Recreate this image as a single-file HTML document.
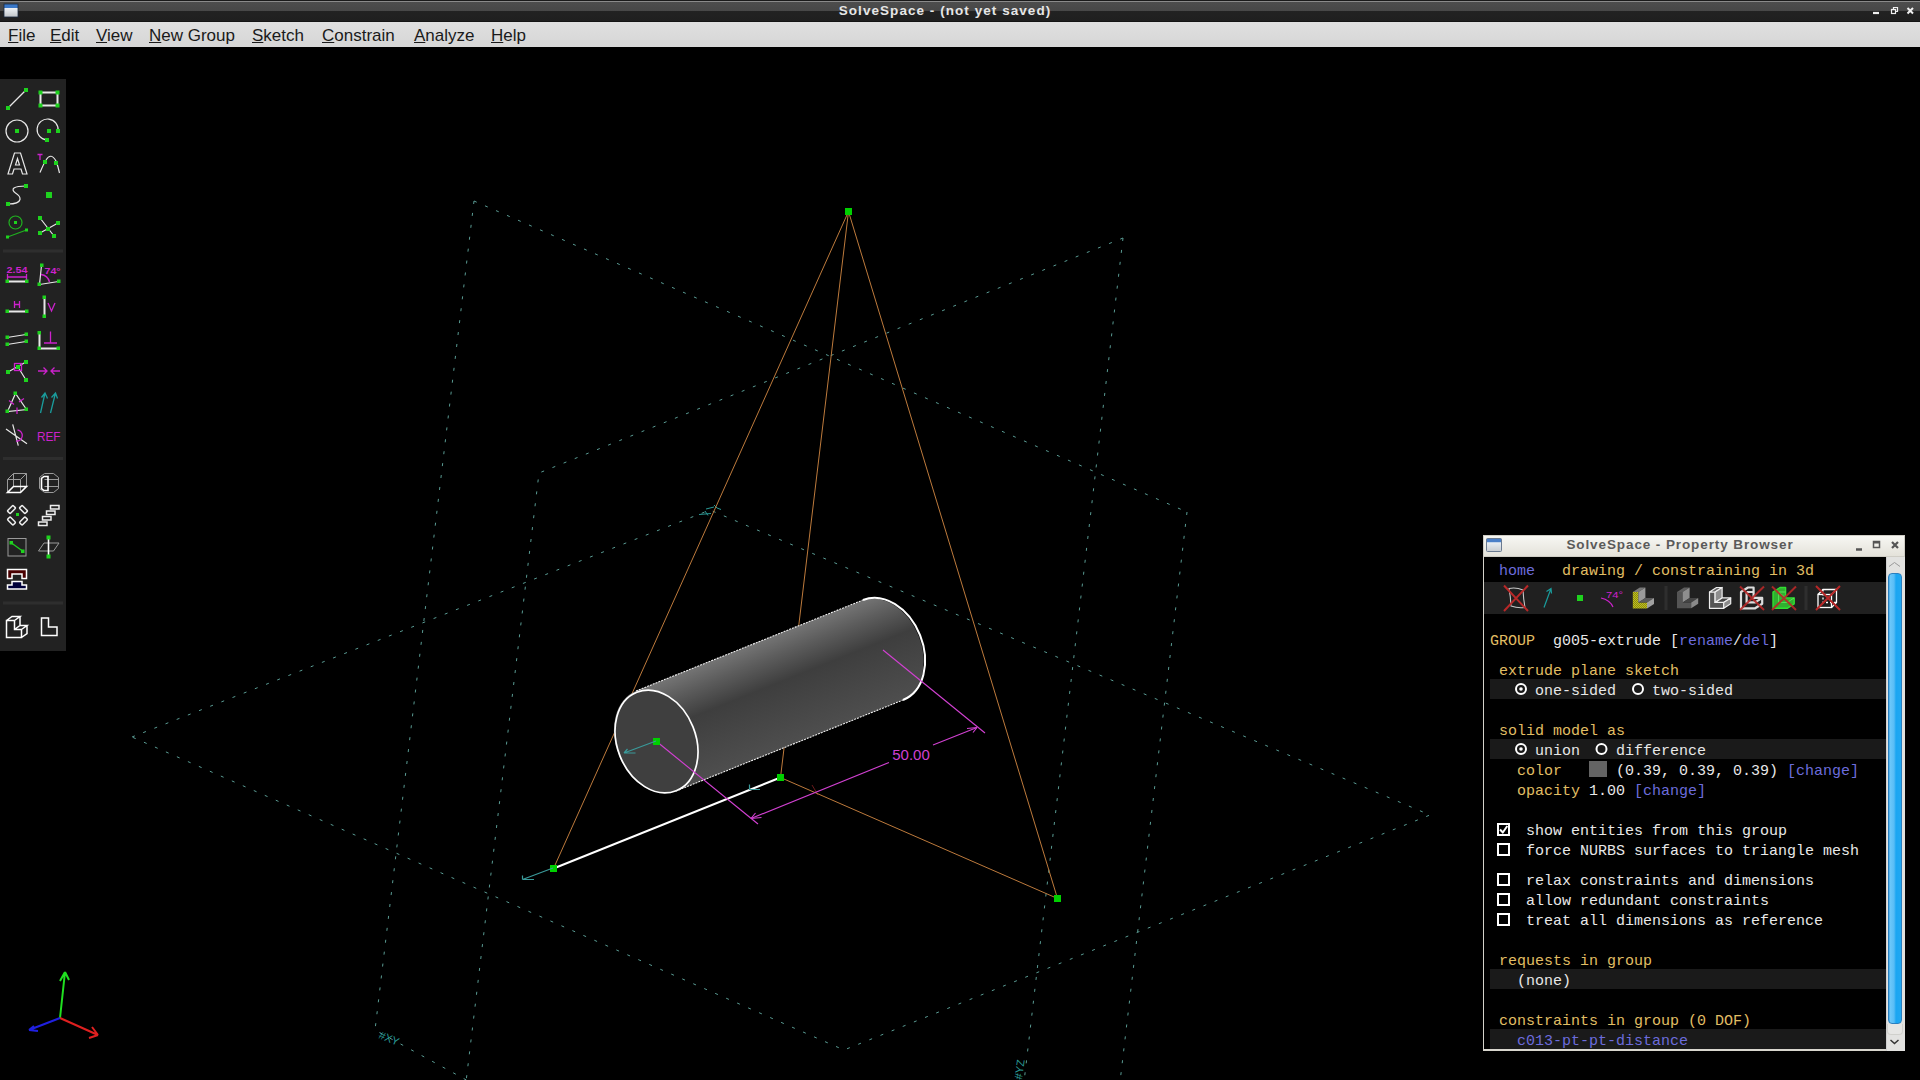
<!DOCTYPE html>
<html><head><meta charset="utf-8">
<style>
html,body{margin:0;padding:0;width:1920px;height:1080px;overflow:hidden;background:#000;}
body{position:relative;font-family:"Liberation Sans",sans-serif;}
.abs{position:absolute;}
#title{left:0;top:0;width:1920px;height:22px;background:linear-gradient(#1a1a1a 0,#1a1a1a 1px,#8a8a8a 1px,#8a8a8a 2px,#4d4d4d 2px,#474747 11px,#222 11px,#1f1f1f 21px,#0a0a0a 22px);}
#title .t{left:1px;width:1888px;top:2px;text-align:center;color:#e6e6e6;font-weight:bold;font-size:13.5px;line-height:18px;letter-spacing:1.05px;}
#menu{left:0;top:22px;width:1920px;height:25px;background:linear-gradient(#e0e0e0,#d6d6d6);}
#menu span{position:absolute;top:4px;font-size:17px;line-height:20px;color:#1a1a1a;white-space:nowrap;}
#menu u{text-decoration:underline;text-decoration-thickness:1px;text-underline-offset:1px;}
#tb{left:0;top:79px;width:66px;height:572px;background:#222;}
#pb{left:1483px;top:535px;width:422px;height:516px;background:#000;}
#pbt{left:0;top:0;width:422px;height:22px;background:linear-gradient(#f7f7f3,#e4e2da);border:1px solid #cfcdc5;box-sizing:border-box;}
#pbt .t{left:1px;width:390px;top:0px;text-align:center;color:#5a5a5a;font-weight:bold;font-size:13.5px;line-height:18px;letter-spacing:0.9px;}
.mono{font-family:"Liberation Mono",monospace;font-size:15px;line-height:20px;white-space:pre;position:absolute;}
.y{color:#e0be64;}.w{color:#e8e8e8;}.b{color:#6c6cdc;}
</style></head><body>
<svg class="abs" style="left:0;top:0" width="1920" height="1080" viewBox="0 0 1920 1080">
<g fill="none" stroke="#5a9c94" stroke-width="1" stroke-dasharray="3 9">
<path d="M474 201 L1187 512 M474 201 L375 1030 L470 1082 M1187 512 L1120 1082"/>
<path d="M1123 238 L539 473 L466 1082 M1123 238 L1024 1082"/>
<path d="M132 737 L710 510 L1430 815 L844 1050 Z"/>
</g>
<g fill="#2a9a96" font-family="Liberation Sans" font-size="11">
<text x="0" y="0" transform="translate(378 1038) rotate(22)">#XY</text>
<text x="0" y="0" transform="translate(1022 1080) rotate(-82)">#YZ</text>
</g>
<g stroke="#2a9a96" stroke-width="1" fill="none">
<path d="M699 514.5 l12 -1 M705 511 l3 4.5 M706 509 l8 -2 M717 508 l4 1.5 M714 505 l3 3"/>
</g>
<path d="M812 785 l6 10" stroke="#6a1a1a" stroke-width="1"/>
<g stroke="#bd7a3c" stroke-width="1" fill="none">
<path d="M848.5 211.5 L553.5 868.5 M848.5 211.5 L780.5 777.5 M848.5 211.5 L1057.5 898.5 M780.5 777.5 L1057.5 898.5"/>
</g>
<path d="M553.5 868.5 L780.5 777.5" stroke="#fff" stroke-width="2" fill="none"/>
<defs>
<linearGradient id="cyl" gradientUnits="userSpaceOnUse" x1="636" y1="691" x2="676" y2="791">
<stop offset="0" stop-color="#747474"/>
<stop offset="0.18" stop-color="#5c5c5c"/>
<stop offset="0.42" stop-color="#3e3e3e"/>
<stop offset="0.7" stop-color="#464646"/>
<stop offset="1" stop-color="#4e4e4e"/>
</linearGradient>
</defs>
<path d="M636 691 L863 600.2 A39.8 53.7 -21.8 0 1 903 699.8 L676 791 A39.8 53.7 -21.8 0 1 636 691 Z" fill="url(#cyl)"/>
<ellipse cx="656.5" cy="741.5" rx="39.3" ry="53" transform="rotate(-21.8 656.5 741.5)" fill="#3f3f3f" stroke="#fff" stroke-width="1.7"/>
<path d="M636 691 L863 600 M676 791 L903 700" stroke="#f0f0f0" stroke-width="1.1" stroke-dasharray="2 1" fill="none"/>
<path d="M863 600 A39.8 53.7 -21.8 0 1 903 700" stroke="#fff" stroke-width="2" fill="none"/>
<g stroke="#d040d0" stroke-width="1.15" fill="none">
<path d="M656 741 L758 824 M883 650 L985 733"/>
<path d="M751 818.5 L889 762.5 M933 745 L977 727.5"/>
<path d="M751 818.5 l4.5 -5.5 M751 818.5 l10.5 -1"/>
<path d="M977 727.5 l-4 5 M977 727.5 l-10 1"/>
</g>
<text x="911" y="760" fill="#d040d0" font-family="Liberation Sans" font-size="15" text-anchor="middle">50.00</text>
<g fill="#00d000">
<rect x="845" y="208" width="7" height="7"/>
<rect x="550" y="865" width="7" height="7"/>
<rect x="777" y="774" width="7" height="7"/>
<rect x="1054" y="895" width="7" height="7"/>
<rect x="653" y="738" width="7" height="7"/>
</g>
<g stroke="#3a9a9a" stroke-width="1.2" fill="none">
<path d="M553 868 L522.5 879.5 M522.5 879.5 V875.5 M522.5 879.5 H534"/>
<path d="M656 741 L624 753 M624 753 l3.5 -4 M624 753 H635.5"/>
<path d="M749.5 784.5 V789.5 H760"/>
</g>
<g stroke-width="2" fill="none">
<path d="M60 1018 L65 972 M65 972 l-5 9 M65 972 l4 8" stroke="#20e020"/>
<path d="M60 1018 L98 1035 M98 1035 l-6 -8 M98 1035 l-9 3" stroke="#e02020"/>
<path d="M60 1018 L29 1030 M29 1030 l5 -4 M29 1030 l9 1" stroke="#2020e0"/>
</g>
</svg>
<div id="title" class="abs"><div class="t abs">SolveSpace - (not yet saved)</div></div>
<svg class="abs" style="left:1860px;top:0" width="60" height="22">
<path d="M13 13 h6" stroke="#f0f0f0" stroke-width="2.2"/>
<rect x="31.5" y="9.5" width="4" height="4" fill="none" stroke="#f0f0f0" stroke-width="1.2"/>
<path d="M33.5 9.5 V7.5 H37.5 V11.5 H35.5" fill="none" stroke="#f0f0f0" stroke-width="1.2"/>
<path d="M47.5 8 l5.5 5.5 M53 8 l-5.5 5.5" stroke="#f0f0f0" stroke-width="2"/>
</svg>
<svg class="abs" style="left:0;top:0" width="24" height="22">
<defs><linearGradient id="mic" x1="0" y1="0" x2="0" y2="1"><stop offset="0" stop-color="#3a78c8"/><stop offset="0.3" stop-color="#3a78c8"/><stop offset="0.31" stop-color="#eef2f6"/><stop offset="1" stop-color="#c0c4c8"/></linearGradient></defs>
<rect x="4" y="4" width="14" height="13" fill="url(#mic)" stroke="#1a2a40" stroke-width="0.8"/>
</svg>
<div id="menu" class="abs">
<span style="left:8px"><u>F</u>ile</span>
<span style="left:50px"><u>E</u>dit</span>
<span style="left:96px"><u>V</u>iew</span>
<span style="left:149px"><u>N</u>ew Group</span>
<span style="left:252px"><u>S</u>ketch</span>
<span style="left:322px"><u>C</u>onstrain</span>
<span style="left:414px"><u>A</u>nalyze</span>
<span style="left:491px"><u>H</u>elp</span>
</div>
<div id="tb" class="abs"></div>
<svg class="abs" style="left:0;top:0" width="66" height="651" viewBox="0 0 66 651">
<g fill="#2e2e2e"><rect x="3" y="249.5" width="60" height="3"/><rect x="3" y="457" width="60" height="3"/><rect x="3" y="601.5" width="60" height="3"/></g>
<g fill="none" stroke="#e8e8e8" stroke-width="1.2">
<path d="M8 108 L26 90"/>
<rect x="40.5" y="92.5" width="17" height="13" stroke-width="2"/>
<circle cx="17" cy="131" r="11"/>
<path d="M47 140 A10.5 10.5 0 1 1 58 131"/>
<path d="M8 174 L14.5 153 L20.5 153 L27 174 L22.5 174 L21 169 L14 169 L12.5 174 Z M15.5 165 L19.5 165 L17.5 158.5 Z"/>
<path d="M40 172.5 Q44 163 46 160 Q51 152 56 161 Q58 166 59.5 173"/>
<path d="M8 204 Q19 204 20 199.5 Q20.5 196 15.5 193 Q11.5 190 14 188 Q17 186 26 186"/>
<path d="M40 218 L54 236 M40 233 L58 223"/>
<path d="M7 281.5 H27" stroke-width="2"/>
<path d="M39.5 284.5 L41.5 265.5 M39.5 284.5 L58.5 281.5"/>
<path d="M7 311.5 H26.5" stroke-width="2"/>
<path d="M44.5 297.5 V316.5" stroke-width="2"/>
<path d="M7 337.5 L26 334.5 M7 344.5 L26 341.5"/>
<path d="M39.5 333 V348.5 H58.5" stroke-width="2"/>
<path d="M8 372 L26 362 M18 367 L26 380"/>
<path d="M15.5 393.5 L7.5 411.5 L26.5 409.5 Z"/>
<path d="M6 429 L27 443.7 M12.7 424.3 L18.3 445.7"/>
</g>
<g fill="none" stroke="#cc22cc" stroke-width="1.3">
<path d="M37.5 154.5 H42.5 M40 154.5 V160"/>
<path d="M7 277 H27 M7.5 274 V280 M26.5 274 V280"/>
<path d="M41 274.5 A10 10 0 0 1 49.5 282"/>
<path d="M14.5 301 V308 M19.5 301 V308 M14.5 304.5 H19.5"/>
<path d="M48 303 L51.5 311 L55 303"/>
<path d="M50.5 331.5 V343 M44 343 H57"/>
<rect x="14.5" y="363.5" width="7" height="7"/>
<path d="M38 371 H47 M43.5 367.5 L47 371 L43.5 374.5 M60 371 H51 M54.5 367.5 L51 371 L54.5 374.5"/>
<path d="M9 400.5 L14 404.5 M19 402 L24 398.5 M17 407.5 V414"/>
<path d="M17.5 430 A5.5 5.5 0 1 1 16 441"/>
</g>
<g fill="#cc22cc" font-family="Liberation Sans" font-weight="bold">
<text x="6.5" y="272.5" font-size="9.5" textLength="21" lengthAdjust="spacingAndGlyphs">2.54</text>
<text x="44.5" y="273.5" font-size="9.5" textLength="16" lengthAdjust="spacingAndGlyphs">74°</text>
<text x="37" y="440.5" font-size="13" font-weight="normal" textLength="23.5" lengthAdjust="spacingAndGlyphs">REF</text>
</g>
<g fill="none" stroke="#1a9c9c" stroke-width="1.3">
<path d="M40.5 413 L45 393 M41.5 397.5 L45 393 L47.5 398.5 M50.5 413 L55.5 393 M51.5 397.5 L55.5 393 L57.5 398.5"/>
</g>
<g fill="none" stroke="#20b020" stroke-width="1.2">
<circle cx="15.5" cy="222.5" r="6.5"/>
<path d="M7.5 237 L26.5 230"/>
</g>
<g fill="#1ed21e">
<rect x="6" y="106" width="4" height="4"/><rect x="24" y="88" width="4" height="4"/>
<rect x="38.5" y="90.5" width="4" height="4"/><rect x="55.5" y="90.5" width="4" height="4"/><rect x="38.5" y="103.5" width="4" height="4"/><rect x="55.5" y="103.5" width="4" height="4"/>
<rect x="15" y="129" width="4" height="4"/>
<rect x="47" y="129" width="4" height="4"/><rect x="56" y="129" width="4" height="4"/><rect x="45" y="138" width="4" height="4"/>
<rect x="43" y="160" width="4" height="4"/><rect x="54" y="161" width="4" height="4"/>
<rect x="6" y="202" width="4" height="4"/><rect x="24" y="184" width="4" height="4"/>
<rect x="46" y="192" width="6" height="6"/>
<rect x="14" y="221" width="3" height="3"/><rect x="6" y="235.5" width="3" height="3"/><rect x="25" y="228.5" width="3" height="3"/>
<rect x="38" y="216" width="4" height="4"/><rect x="56" y="221" width="4" height="4"/><rect x="38" y="231" width="4" height="4"/><rect x="52" y="234" width="4" height="4"/><rect x="46" y="227" width="4" height="4"/>
<rect x="5.5" y="279.5" width="3.5" height="3.5"/><rect x="25" y="279.5" width="3.5" height="3.5"/>
<rect x="40" y="263.5" width="3.5" height="3.5"/><rect x="57" y="279.5" width="3.5" height="3.5"/><rect x="37.5" y="282.5" width="3.5" height="3.5"/>
<rect x="5.5" y="309.5" width="3.5" height="3.5"/><rect x="25" y="309.5" width="3.5" height="3.5"/>
<rect x="42.5" y="295.5" width="3.5" height="3.5"/><rect x="42.5" y="314.5" width="3.5" height="3.5"/>
<rect x="5.5" y="335.5" width="3.5" height="3.5"/><rect x="24.5" y="332.5" width="3.5" height="3.5"/><rect x="5.5" y="342.5" width="3.5" height="3.5"/><rect x="24.5" y="339.5" width="3.5" height="3.5"/>
<rect x="37.5" y="331" width="3.5" height="3.5"/><rect x="37.5" y="346.5" width="3.5" height="3.5"/><rect x="56.5" y="346.5" width="3.5" height="3.5"/>
<rect x="6" y="370" width="4" height="4"/><rect x="24" y="360" width="4" height="4"/><rect x="24" y="378" width="4" height="4"/><rect x="16" y="365" width="4" height="4"/>
<rect x="13.5" y="391.5" width="3.5" height="3.5"/><rect x="5.5" y="409.5" width="3.5" height="3.5"/><rect x="24.5" y="407.5" width="3.5" height="3.5"/>
</g>
<g fill="none" stroke="#9a9a9a" stroke-width="1">
<path d="M7.5 479.5 H20.5 V492.5 M7.5 479.5 V492.5 M13.5 473.5 H26.5 V486.5 M7.5 479.5 L13.5 473.5 M20.5 479.5 L26.5 473.5 M13.5 473.5 V486.5"/>
<path d="M44.5 473.5 H53.5 L58.5 477.5 V488.5 L53.5 492.5 H44.5 L39.5 488.5 V477.5 Z M44.5 479.5 H58.5 M44.5 486.5 H58.5"/>
<rect x="8" y="538.5" width="18" height="17.5"/>
<path d="M38.5 551 L44 543 H59 L53.5 551 Z"/>
</g>
<g fill="none" stroke="#fff" stroke-width="1.6">
<path d="M7.5 492.5 L13.5 486.5 H26.5 L20.5 492.5 Z"/>
<path d="M44 476.5 H48 V490.5 H44 L41.5 488.5 V478.5 Z"/>
</g>
<g fill="none" stroke="#eee" stroke-width="1.5">
<rect x="-4" y="-2" width="8" height="4" rx="1" transform="translate(11.5 509.5) rotate(-45)"/>
<rect x="-4" y="-2" width="8" height="4" rx="1" transform="translate(23.5 509.5) rotate(45)"/>
<rect x="-4" y="-2" width="8" height="4" rx="1" transform="translate(11.5 521) rotate(45)"/>
<rect x="-4" y="-2" width="8" height="4" rx="1" transform="translate(23.5 521) rotate(-45)"/>
<rect x="38.5" y="522" width="8.5" height="3.5"/>
<rect x="42.5" y="516.5" width="8.5" height="3.5"/>
<rect x="46.5" y="511" width="8.5" height="3.5"/>
<rect x="50.5" y="505.5" width="8.5" height="3.5"/>
</g>
<g fill="#1ed21e"><rect x="16" y="513" width="3" height="3"/></g>
<path d="M11.5 543 L22.5 551" stroke="#1ed21e" stroke-width="1.3"/>
<g fill="#1ed21e"><rect x="9.5" y="541" width="3.5" height="3.5"/><rect x="21" y="549.5" width="3.5" height="3.5"/></g>
<path d="M48.5 537.5 V556.5" stroke="#fff" stroke-width="1.6"/>
<g fill="#1ed21e"><rect x="46.5" y="535.5" width="4" height="4"/><rect x="46.5" y="554.5" width="4" height="4"/></g>
<path d="M7.5 569.5 H26.5 V578.5 H22 V574 H12 V578.5 H7.5 Z" fill="#4a0000" stroke="#fff" stroke-width="1.5"/>
<path d="M12 581.5 H22 V585 H26.5 V589 H7.5 V585 H12 Z" fill="#00003a" stroke="#fff" stroke-width="1.5"/>
<g fill="none" stroke="#fff" stroke-width="1.5">
<path d="M6.5 620.5 H14.5 V629.5 H21.5 V637.5 H6.5 Z M6.5 620.5 L12 616.5 H20 L14.5 620.5 M20 616.5 V625.5 M14.5 629.5 L20 625.5 H27 L21.5 629.5 M27 625.5 V633.5 L21.5 637.5"/>
<path d="M41.5 618 H48.5 V627 H57 V635.5 H41.5 Z"/>
</g>
</svg>
<div id="pb" class="abs">
<div id="pbt" class="abs"><div class="t abs">SolveSpace - Property Browser</div></div>
<div class="abs" style="left:0;top:22px;width:1px;height:494px;background:#d4d2ca"></div>
<div class="abs" style="left:0;top:514px;width:422px;height:2px;background:#d8d6ce"></div>
<div class="abs" style="left:403px;top:22px;width:19px;height:494px;background:#e2e2e0;border-left:1px solid #cfcfcf;box-sizing:border-box"></div>
<div class="abs" style="left:405px;top:38px;width:14px;height:451px;border-radius:4px;background:linear-gradient(90deg,#3a9ee0 0,#6cc8fa 1px,#58bdf6 5px,#1aa6f2 7px,#20a8f2 12px,#2a86c8 14px);border:1px solid #2a7fbf;box-sizing:border-box"></div>
<div class="abs" style="left:404px;top:489px;width:16px;height:11px;background:#e6e6e4;border:1px solid #d0d0cc;border-top:none;border-radius:0 0 4px 4px;box-sizing:border-box"></div>
<svg class="abs" style="left:0;top:0" width="422" height="516">
<rect x="3.5" y="3.5" width="15" height="13" rx="1" fill="url(#wic)" stroke="#6a7a90" stroke-width="1"/>
<defs><linearGradient id="wic" x1="0" y1="0" x2="0" y2="1"><stop offset="0" stop-color="#4a7fc8"/><stop offset="0.3" stop-color="#4a7fc8"/><stop offset="0.31" stop-color="#e8eef4"/><stop offset="1" stop-color="#c8ccd0"/></linearGradient></defs>
<path d="M373 14.5 h6" stroke="#555" stroke-width="2.5"/>
<rect x="390.5" y="6.5" width="6" height="6" fill="none" stroke="#555" stroke-width="1.5"/>
<path d="M390.5 7.5 h6" stroke="#555" stroke-width="2"/>
<path d="M409 7 l6 6 M415 7 l-6 6" stroke="#555" stroke-width="2.2"/>
<path d="M406 31.5 l5.5 -4 l5.5 4" fill="none" stroke="#9a9a9a" stroke-width="1"/>
<path d="M407.5 505 l4 3.5 l4 -3.5" fill="none" stroke="#333" stroke-width="1.5"/>
</svg>
</div>
<div class="abs" style="left:1484px;top:582px;width:402px;height:32px;background:#202020"></div>
<div class="abs" style="left:1490px;top:679px;width:396px;height:20px;background:#1a1a1a"></div>
<div class="abs" style="left:1490px;top:739px;width:396px;height:20px;background:#1a1a1a"></div>
<div class="abs" style="left:1490px;top:969px;width:396px;height:20px;background:#1a1a1a"></div>
<div class="abs" style="left:1490px;top:1029px;width:396px;height:20px;background:#1a1a1a"></div>
<div class="mono b" style="left:1499px;top:562px">home</div>
<div class="mono y" style="left:1562px;top:562px">drawing / constraining in 3d</div>
<div class="mono y" style="left:1490px;top:632px">GROUP</div>
<div class="mono w" style="left:1553px;top:632px">g005-extrude [</div>
<div class="mono b" style="left:1679px;top:632px">rename</div>
<div class="mono w" style="left:1733px;top:632px">/</div>
<div class="mono b" style="left:1742px;top:632px">del</div>
<div class="mono w" style="left:1769px;top:632px">]</div>
<div class="mono y" style="left:1499px;top:662px">extrude plane sketch</div>
<div class="mono w" style="left:1535px;top:682px">one-sided</div>
<div class="mono w" style="left:1652px;top:682px">two-sided</div>
<div class="mono y" style="left:1499px;top:722px">solid model as</div>
<div class="mono w" style="left:1535px;top:742px">union</div>
<div class="mono w" style="left:1616px;top:742px">difference</div>
<div class="mono y" style="left:1517px;top:762px">color</div>
<div class="mono w" style="left:1616px;top:762px">(0.39, 0.39, 0.39)</div>
<div class="mono b" style="left:1787px;top:762px">[change]</div>
<div class="mono y" style="left:1517px;top:782px">opacity</div>
<div class="mono w" style="left:1589px;top:782px">1.00</div>
<div class="mono b" style="left:1634px;top:782px">[change]</div>
<div class="mono w" style="left:1526px;top:822px">show entities from this group</div>
<div class="mono w" style="left:1526px;top:842px">force NURBS surfaces to triangle mesh</div>
<div class="mono w" style="left:1526px;top:872px">relax constraints and dimensions</div>
<div class="mono w" style="left:1526px;top:892px">allow redundant constraints</div>
<div class="mono w" style="left:1526px;top:912px">treat all dimensions as reference</div>
<div class="mono y" style="left:1499px;top:952px">requests in group</div>
<div class="mono w" style="left:1517px;top:972px">(none)</div>
<div class="mono y" style="left:1499px;top:1012px">constraints in group (0 DOF)</div>
<div class="mono b" style="left:1517px;top:1032px">c013-pt-pt-distance</div>
<div class="abs" style="left:1589px;top:761px;width:18px;height:16px;background:#646464"></div>
<svg class="abs" style="left:1484px;top:582px" width="402" height="32" viewBox="1484 582 402 32">
<defs>
<pattern id="chk" width="2" height="2" patternUnits="userSpaceOnUse"><rect width="2" height="2" fill="#6a6a10"/><rect width="1" height="1" fill="#e0e020"/><rect x="1" y="1" width="1" height="1" fill="#e0e020"/></pattern>
</defs>
<g fill="#2e2e2e"><rect x="1664.5" y="586" width="3" height="24"/><rect x="1804.5" y="586" width="3" height="24"/></g>
<path d="M1509 588.5 Q1516 587 1523 590 Q1523.5 600 1525 607.5 Q1518 608.5 1511 606 Q1510.5 596 1509 588.5 Z" fill="none" stroke="#c8c8c8" stroke-width="1.1"/>
<path d="M1504 585.5 L1528 611 M1528 585.5 L1504 611" stroke="#b82828" stroke-width="2"/>
<path d="M1544 607.5 L1551 588.5 M1546.5 591.5 L1551 588.5 L1551.5 593.5" fill="none" stroke="#1a9c9c" stroke-width="1.2"/>
<rect x="1577" y="595" width="6" height="6" fill="#1ed21e"/>
<path d="M1601 598 Q1610 600 1613 607" fill="none" stroke="#cc22cc" stroke-width="1.2"/>
<text x="1606" y="597.5" font-family="Liberation Sans" font-size="9.5" fill="#cc22cc" textLength="17" lengthAdjust="spacingAndGlyphs">74°</text>
<g transform="translate(1632.8 592.1)">
<path d="M0 0 H5.6 V10.4 H14.2 V16.3 H0 Z" fill="url(#chk)"/>
<path d="M0 0 L7 -4.5 H12.6 L5.6 0 Z" fill="#777"/>
<path d="M5.6 0 L12.6 -4.5 V5.9 L5.6 10.4 Z" fill="#9a9a9a"/>
<path d="M5.6 10.4 L12.6 5.9 H21.2 L14.2 10.4 Z" fill="#5a5a5a"/>
<path d="M14.2 10.4 L21.2 5.9 V11.8 L14.2 16.3 Z" fill="#a0a0a0"/>
</g>
<g transform="translate(1677 592)">
<path d="M0 0 H5.6 V10.4 H14.2 V16.3 H0 Z" fill="#555"/>
<path d="M0 0 L7 -4.5 H12.6 L5.6 0 Z" fill="#5e5e5e"/>
<path d="M5.6 0 L12.6 -4.5 V5.9 L5.6 10.4 Z" fill="#8e8e8e"/>
<path d="M5.6 10.4 L12.6 5.9 H21.2 L14.2 10.4 Z" fill="#444"/>
<path d="M14.2 10.4 L21.2 5.9 V11.8 L14.2 16.3 Z" fill="#8a8a8a"/>
</g>
<g transform="translate(1709.5 592)" stroke="#eee" stroke-width="1.2" stroke-linejoin="round">
<path d="M0 0 H5.6 V10.4 H14.2 V16.3 H0 Z" fill="#555"/>
<path d="M0 0 L7 -4.5 H12.6 L5.6 0 Z" fill="#666"/>
<path d="M5.6 0 L12.6 -4.5 V5.9 L5.6 10.4 Z" fill="#8e8e8e"/>
<path d="M5.6 10.4 L12.6 5.9 H21.2 L14.2 10.4 Z" fill="#444"/>
<path d="M14.2 10.4 L21.2 5.9 V11.8 L14.2 16.3 Z" fill="#8a8a8a"/>
</g>
<g transform="translate(1741 592)" stroke="#ddd" stroke-width="2.2" stroke-linejoin="round" fill="none">
<path d="M0 0 L7 -4.5 H12.6 V5.9 H21.2 V11.8 L14.2 16.3 H0 Z M5.6 0 V10.4 H14.2 L21.2 5.9 M5.6 0 H12.6"/>
</g>
<g transform="translate(1773 592)" stroke="#30e030" stroke-width="1.4" stroke-linejoin="round" fill="#30b030">
<path d="M0 0 L7 -4.5 H12.6 V5.9 H21.2 V11.8 L14.2 16.3 H0 Z"/>
<path d="M5.6 0 V10.4 H14.2 L21.2 5.9 M5.6 0 H12.6 M5.6 0 L12.6 5.9" fill="none" stroke="#60f060" stroke-width="0.8"/>
</g>
<path d="M1740 586.5 L1764 610 M1764 586.5 L1740 610" stroke="#b82828" stroke-width="2" opacity="0.9"/>
<path d="M1772 586.5 L1796 610 M1796 586.5 L1772 610" stroke="#b82828" stroke-width="2" opacity="0.9"/>
<g fill="none" stroke="#fff" stroke-width="1.3">
<rect x="1818" y="594.5" width="13.5" height="13"/>
<path d="M1818 594.5 L1823 589.5 H1836.5 V602.5 L1831.5 607.5 M1831.5 594.5 L1836.5 589.5"/>
<path d="M1823 589.5 V602.5 H1836.5" stroke-dasharray="2 2"/>
</g>
<path d="M1816 586 L1840 610 M1840 586 L1816 610" stroke="#b82828" stroke-width="2"/>
</svg>
<svg class="abs" style="left:0;top:0;pointer-events:none" width="1920" height="1080">
<g fill="none" stroke="#fff" stroke-width="2">
<circle cx="1521" cy="689" r="5"/><circle cx="1638" cy="689" r="5"/>
<circle cx="1521" cy="749" r="5"/><circle cx="1601.5" cy="749" r="5"/>
<rect x="1498" y="824" width="11" height="11"/>
<rect x="1498" y="844" width="11" height="11"/>
<rect x="1498" y="874" width="11" height="11"/>
<rect x="1498" y="894" width="11" height="11"/>
<rect x="1498" y="914" width="11" height="11"/>
<path d="M1500 829.5 l2.8 3 l4.5 -6.5" stroke-width="2"/>
</g>
<g fill="#fff"><circle cx="1521" cy="689" r="1.8"/><circle cx="1521" cy="749" r="1.8"/></g>
</svg>
</body></html>
